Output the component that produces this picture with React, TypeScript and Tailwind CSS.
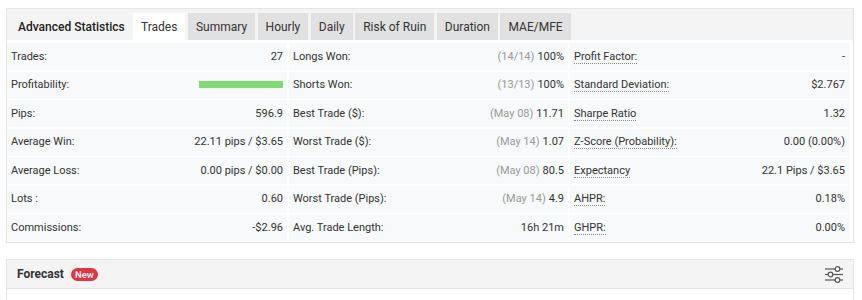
import React from "react";

type Cell = { label: string; value: React.ReactNode; dotted?: boolean };

const TABS = ["Trades", "Summary", "Hourly", "Daily", "Risk of Ruin", "Duration", "MAE/MFE"];

function Muted({ children }: { children: React.ReactNode }) {
  return <span className="mr-[3px] text-[#9a9a9a]">{children}</span>;
}

const ROWS: Cell[][] = [
  [
    { label: "Trades:", value: "27" },
    { label: "Longs Won:", value: <><Muted>(14/14)</Muted>100%</> },
    { label: "Profit Factor:", value: "-", dotted: true },
  ],
  [
    { label: "Profitability:", value: <span className="block h-[7px] w-[84px] bg-[#7fdb75]" /> },
    { label: "Shorts Won:", value: <><Muted>(13/13)</Muted>100%</> },
    { label: "Standard Deviation:", value: "$2.767", dotted: true },
  ],
  [
    { label: "Pips:", value: "596.9" },
    { label: "Best Trade ($):", value: <><Muted>(May 08)</Muted>11.71</> },
    { label: "Sharpe Ratio", value: "1.32", dotted: true },
  ],
  [
    { label: "Average Win:", value: "22.11 pips / $3.65" },
    { label: "Worst Trade ($):", value: <><Muted>(May 14)</Muted>1.07</> },
    { label: "Z-Score (Probability):", value: "0.00 (0.00%)", dotted: true },
  ],
  [
    { label: "Average Loss:", value: "0.00 pips / $0.00" },
    { label: "Best Trade (Pips):", value: <><Muted>(May 08)</Muted>80.5</> },
    { label: "Expectancy", value: "22.1 Pips / $3.65", dotted: true },
  ],
  [
    { label: "Lots :", value: "0.60" },
    { label: "Worst Trade (Pips):", value: <><Muted>(May 14)</Muted>4.9</> },
    { label: "AHPR:", value: "0.18%", dotted: true },
  ],
  [
    { label: "Commissions:", value: "-$2.96" },
    { label: "Avg. Trade Length:", value: "16h 21m" },
    { label: "GHPR:", value: "0.00%", dotted: true },
  ],
];

function SlidersIcon() {
  return (
    <svg width="18" height="17" viewBox="0 0 18 17" fill="none" stroke="#555" strokeWidth="1.2">
      <line x1="0" y1="3" x2="10" y2="3" />
      <line x1="15" y1="3" x2="18" y2="3" />
      <circle cx="12.5" cy="3" r="2.3" fill="white" />
      <line x1="0" y1="8.5" x2="3" y2="8.5" />
      <line x1="8" y1="8.5" x2="18" y2="8.5" />
      <circle cx="5.5" cy="8.5" r="2.3" fill="white" />
      <line x1="0" y1="14" x2="10" y2="14" />
      <line x1="15" y1="14" x2="18" y2="14" />
      <circle cx="12.5" cy="14" r="2.3" fill="white" />
    </svg>
  );
}

export default function App() {
  return (
    <div className="h-[300px] w-[862px] overflow-hidden bg-white pt-[8px] pl-[6px] font-['Roboto',sans-serif] text-[#333]">
      {/* Advanced statistics panel */}
      <div className="w-[848px] border border-[#e6e6e6]">
        <div className="flex h-[31px] items-end bg-[#f4f4f4]">
          <div className="flex h-[27px] w-[126px] items-center pl-[11px] text-[12px] font-medium text-[#222]">
            Advanced Statistics
          </div>
          <div className="flex gap-[2.5px]">
            {TABS.map((t, i) => (
              <div
                key={t}
                className={`flex h-[27px] items-center px-[8px] text-[12px] ${
                  i === 0 ? "bg-white text-[#333]" : "bg-[#e1e1e1] text-[#333]"
                }`}
              >
                {t}
              </div>
            ))}
          </div>
        </div>
        <div className="grid grid-cols-[280px_279px_279px] gap-x-[2px] gap-y-[1.5px] pt-[3px] pr-[4px] pb-[1px] text-[11px]">
          {ROWS.flat().map((c, i) => (
            <div key={i} className="flex h-[27px] items-center justify-between bg-[#f7f9fb] pl-[4px] pr-[4px]">
              <span
                className={`border-b leading-[13px] ${c.dotted ? "border-dotted border-[#888]" : "border-transparent"}`}
              >
                {c.label}
              </span>
              <span className="flex items-center leading-[13px] pb-[1px]">{c.value}</span>
            </div>
          ))}
        </div>
      </div>

      {/* Forecast panel */}
      <div className="mt-[16px] w-[848px] border border-[#e6e6e6]">
        <div className="flex h-[29px] items-center justify-between border-b border-[#e6e6e6] bg-[#f4f4f4] pl-[10px] pr-[10px]">
          <div className="flex items-center gap-[7px]">
            <span className="text-[12px] font-bold text-[#333]">Forecast</span>
            <span className="rounded-full bg-[#e2333f] px-[4px] text-[9.5px] leading-[13px] font-medium text-white">New</span>
          </div>
          <SlidersIcon />
        </div>
        <div className="h-[20px]" />
      </div>
    </div>
  );
}
